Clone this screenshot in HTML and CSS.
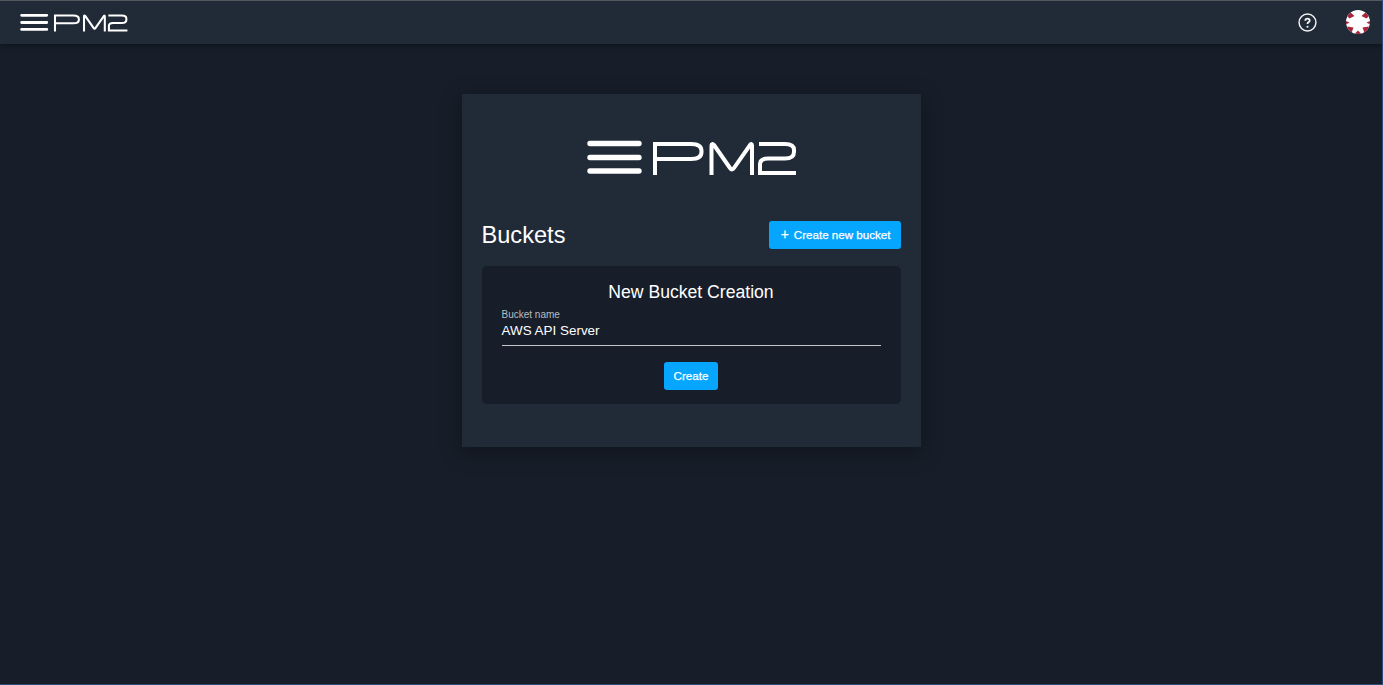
FILE: index.html
```html
<!DOCTYPE html>
<html>
	<head>
		<meta charset="UTF-8">
		<title>PM2 Buckets</title>
		<link rel="stylesheet" href="styles.css">
	</head>
	<body>
		<svg class="defs" width="0" height="0">
			<symbol id="pm2-logo" viewBox="0 0 210 37">
				<g fill="none" stroke="#fff">
					<path d="M3 4.5H52M3 18.5H52M3 32H52" stroke-width="5.4" stroke-linecap="round"/>
					<path d="M68 36V5H104Q114.5 5 114.5 12V13Q114.5 20 104 20H68" stroke-width="4"/>
					<path d="M124.5 36V6.5Q124.5 4 127 6L143 29Q145 32 147 29L163 6Q165 4 165 6.5V36" stroke-width="4"/>
					<path d="M172 5H198Q207 5 207 11V13Q207 19.5 198 19.5H181Q173 19.5 173 25V34H209" stroke-width="4"/>
				</g>
			</symbol>
		</svg>
		<div class="topbar">
			<svg class="logo-small"><use href="#pm2-logo"/></svg>
			<div class="top-icons">
				<svg class="help" viewBox="0 0 20 20" fill="none" stroke="#f2f3f4">
					<circle cx="10" cy="10" r="8.9" stroke-width="1.5"/>
					<path d="M7.7 8.2Q7.7 6 10 6Q12.3 6 12.3 7.8Q12.3 9 11 9.8Q10 10.4 10 11.6" stroke-width="1.9"/>
					<circle cx="10" cy="14.4" r="1.1" fill="#f2f3f4" stroke="none"/>
				</svg>
				<svg class="avatar" viewBox="0 0 24 24">
					<defs>
						<clipPath id="avatar-clip"><circle cx="12" cy="12" r="12"/></clipPath>
					</defs>
					<circle cx="12" cy="12" r="12" fill="#fff"/>
					<g fill="#a9243a" clip-path="url(#avatar-clip)">
						<path d="M4 2L8.5 6L3.5 8.5L1 6Z"/>
						<path d="M20 2L15.5 6L20.5 8.5L23 6Z"/>
						<path d="M0 11L3.5 12.5L0 14.5Z"/>
						<path d="M24 11L20.5 12.5L24 14.5Z"/>
						<path d="M1 16.5L7.5 17.5L5.5 23L2 21Z"/>
						<path d="M23 16.5L16.5 17.5L18.5 23L22 21Z"/>
						<path d="M8.5 24L12 20.5L15.5 24Z"/>
					</g>
				</svg>
			</div>
		</div>
		<div class="page">
			<div class="card">
				<svg class="logo-big"><use href="#pm2-logo"/></svg>
				<div class="card-head">
					<h2 class="title">Buckets</h2>
					<a class="btn btn-new" href="#"><span class="plus">+</span>Create new bucket</a>
				</div>
				<div class="panel">
					<h3 class="panel-title">New Bucket Creation</h3>
					<div class="field">
						<label class="field-label">Bucket name</label>
						<div class="field-value">AWS API Server</div>
					</div>
					<div class="panel-foot">
						<a class="btn" href="#">Create</a>
					</div>
				</div>
			</div>
		</div>
	</body>
</html>
```

FILE: styles.css
```css
*{
	margin: 0;
	padding: 0;
	box-sizing: border-box;
}
html, body{
	height: 100%;
}
body{
	background-color: #171e29;
	color: #fff;
	font-family: "Liberation Sans", Arial, sans-serif;
	display: flex;
	flex-direction: column;
	overflow: hidden;
	border-bottom: 1px solid #2b4a7a;
	border-right: 1px solid #2b4a7a;
}
.defs{
	position: absolute;
}
.topbar{
	height: 44px;
	flex: none;
	background-color: #212b38;
	border-top: 1px solid #555a60;
	box-shadow: 0 1px 6px rgba(0, 0, 0, 0.45);
	padding: 0 12px 0 20px;
	display: flex;
	align-items: center;
	justify-content: space-between;
}
.logo-small{
	width: 108px;
	height: 19px;
}
.top-icons{
	display: flex;
	align-items: center;
	gap: 29px;
}
.help{
	width: 19px;
	height: 19px;
}
.avatar{
	width: 24px;
	height: 24px;
	margin-top: -2px;
}
.page{
	flex: 1;
	display: flex;
	justify-content: center;
	padding-top: 50px;
}
.card{
	width: 459px;
	height: 353px;
	background-color: #212b38;
	box-shadow: 0 5px 20px rgba(0, 0, 0, 0.35);
	padding: 45px 20px 0;
	display: flex;
	flex-direction: column;
}
.logo-big{
	width: 210px;
	height: 37px;
	align-self: center;
	margin-left: 1px;
}
.card-head{
	margin-top: 45px;
	display: flex;
	align-items: center;
	justify-content: space-between;
}
.title{
	font-size: 23.6px;
	font-weight: 400;
	line-height: 28px;
}
.btn{
	display: inline-block;
	height: 28px;
	line-height: 28px;
	padding: 0 10px;
	border-radius: 3px;
	background-color: #06a6ff;
	color: #fff;
	font-size: 11.6px;
	font-weight: 400;
	text-decoration: none;
	-webkit-text-stroke: 0.25px #fff;
}
.plus{
	font-size: 14px;
	line-height: 1;
	margin: 0 5px 0 2px;
}
.panel{
	margin-top: 17px;
	height: 138px;
	background-color: #171e29;
	border-radius: 5px;
	padding: 15px 20px 0;
}
.panel-title{
	font-size: 17.6px;
	font-weight: 400;
	line-height: 22px;
	text-align: center;
}
.field{
	margin-top: 6px;
	height: 37px;
	border-bottom: 1px solid #c4c7ca;
}
.field-label{
	display: block;
	font-size: 10px;
	line-height: 11px;
	color: #b9bcc0;
}
.field-value{
	font-size: 13.44px;
	line-height: 16px;
	margin-top: 3px;
}
.panel-foot{
	margin-top: 16px;
	text-align: center;
}
```
